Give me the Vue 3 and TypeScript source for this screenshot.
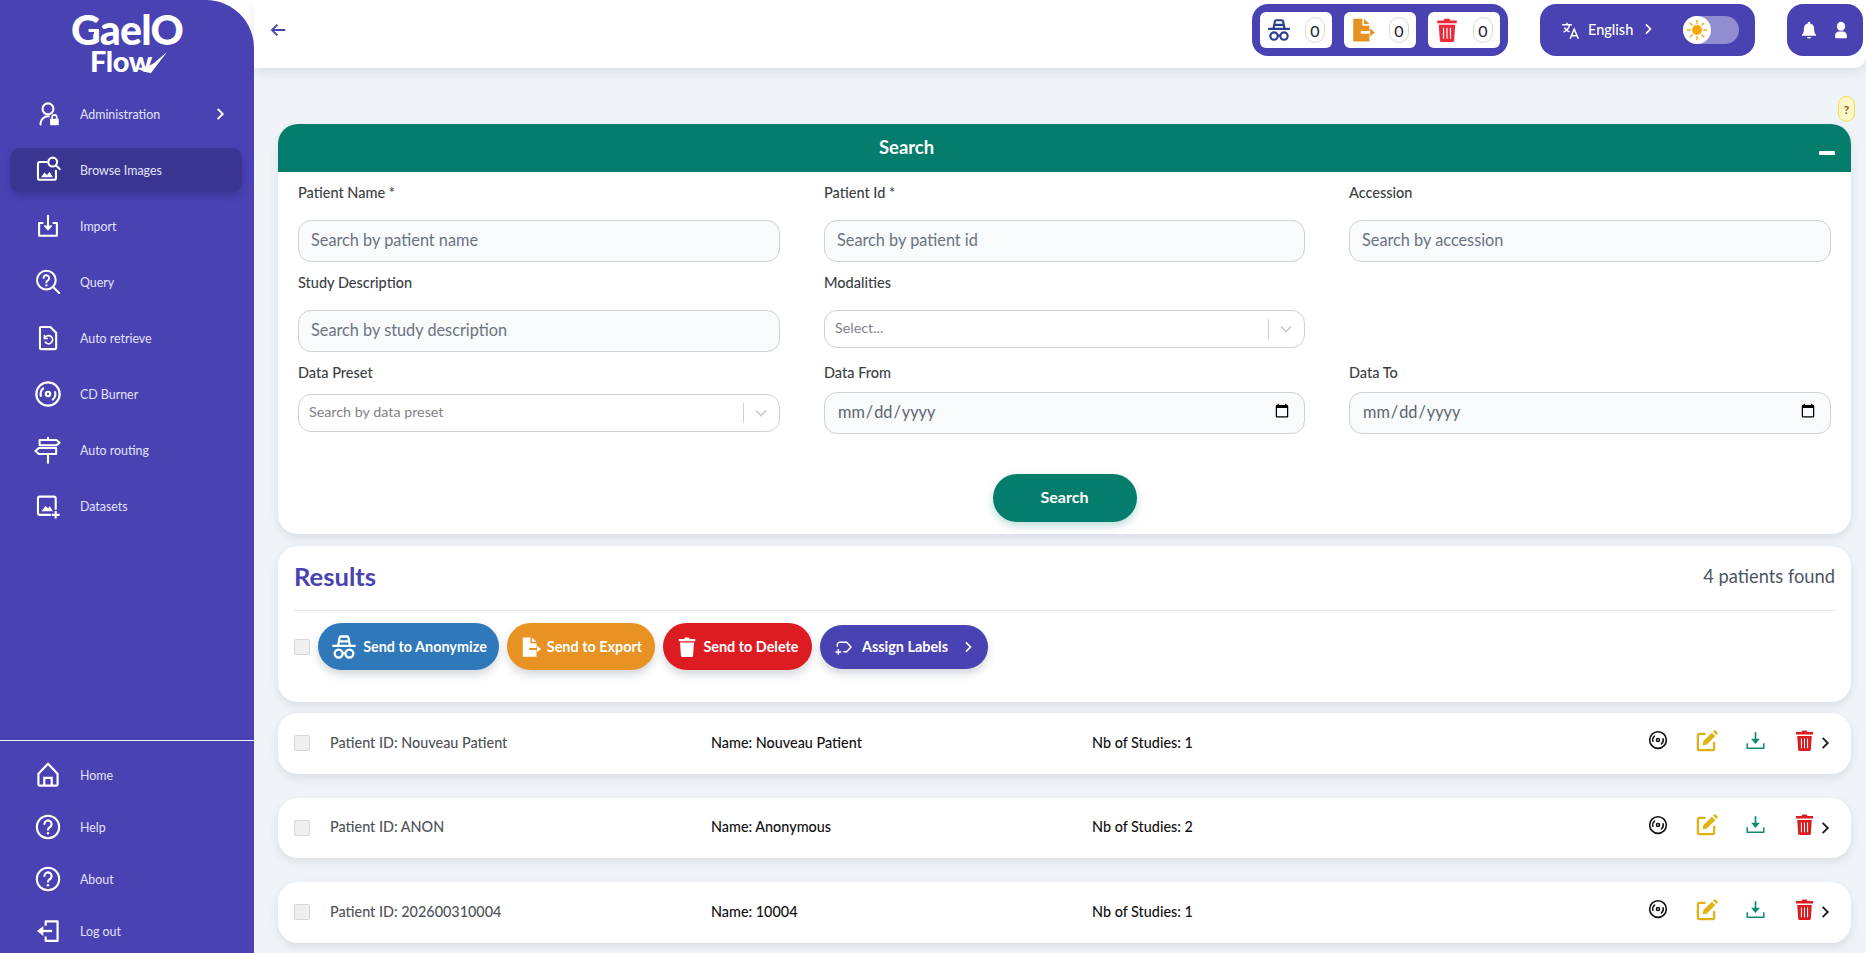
<script setup lang="ts">
interface NavItem { label: string; icon: string; active?: boolean; arrow?: boolean }
const topNav: NavItem[] = [
  { label: 'Administration', icon: 'i-admin', arrow: true },
  { label: 'Browse Images', icon: 'i-browse', active: true },
  { label: 'Import', icon: 'i-import' },
  { label: 'Query', icon: 'i-query' },
  { label: 'Auto retrieve', icon: 'i-retrieve' },
  { label: 'CD Burner', icon: 'i-disc' },
  { label: 'Auto routing', icon: 'i-sign' },
  { label: 'Datasets', icon: 'i-dataset' },
]
const bottomNav: NavItem[] = [
  { label: 'Home', icon: 'i-home' },
  { label: 'Help', icon: 'i-help' },
  { label: 'About', icon: 'i-help' },
  { label: 'Log out', icon: 'i-logout' },
]
const counters = [
  { icon: 'i-hat', cls: 'c-hat' },
  { icon: 'i-export', cls: 'c-export' },
  { icon: 'i-trash', cls: 'c-trash' },
]
const patients = [
  { id: 'Nouveau Patient', name: 'Nouveau Patient', studies: 1 },
  { id: 'ANON', name: 'Anonymous', studies: 2 },
  { id: '202600310004', name: '10004', studies: 1 },
]
const actions = [
  { icon: 'i-disc', cls: 'a-disc' },
  { icon: 'i-edit', cls: 'a-edit' },
  { icon: 'i-download', cls: 'a-download' },
  { icon: 'i-trash', cls: 'a-trash' },
]
</script>

<template>
  <svg class="sprite" aria-hidden="true">
    <symbol id="i-admin" viewBox="0 0 24 24">
      <circle cx="12" cy="7.6" r="4.7" fill="none" stroke="currentColor" stroke-width="1.8" />
      <path d="M5.6 21v-.8a6.4 6.4 0 0 1 7-6.2" fill="none" stroke="currentColor" stroke-width="1.8" stroke-linecap="round" />
      <path d="M13.8 16h7.4v5.6h-7.4z" fill="currentColor" />
      <path d="M15.5 16v-1.2a2 2 0 0 1 4 0V16" fill="none" stroke="currentColor" stroke-width="1.4" />
    </symbol>
    <symbol id="i-browse" viewBox="0 0 24 24">
      <path d="M10.8 5.2H5A1.6 1.6 0 0 0 3.4 6.8v12A1.6 1.6 0 0 0 5 20.4h12.2a1.6 1.6 0 0 0 1.6-1.6v-6.2" fill="none" stroke="currentColor" stroke-width="1.8" stroke-linecap="round" />
      <circle cx="16" cy="5.2" r="3.8" fill="none" stroke="currentColor" stroke-width="1.8" />
      <path d="M18.8 8.2l3.2 3" fill="none" stroke="currentColor" stroke-width="1.8" stroke-linecap="round" />
      <path d="M6 18.2l3-4 2.2 2 2.2-2.6 2.8 4.6z" fill="currentColor" />
    </symbol>
    <symbol id="i-import" viewBox="0 0 24 24">
      <path d="M8 9.4H4.4v11h15.2v-11H16" fill="none" stroke="currentColor" stroke-width="1.8" stroke-linejoin="round" />
      <path d="M12 2.5v11" fill="none" stroke="currentColor" stroke-width="1.8" />
      <path d="M8 11.6h8l-4 4.4z" fill="currentColor" />
    </symbol>
    <symbol id="i-query" viewBox="0 0 24 24">
      <circle cx="10.6" cy="10.4" r="8" fill="none" stroke="currentColor" stroke-width="1.8" />
      <path d="M16.6 16.4l5 5" fill="none" stroke="currentColor" stroke-width="1.8" stroke-linecap="round" />
      <path d="M8.2 8.4a2.4 2.4 0 1 1 3.4 2.4c-.8.4-1 .9-1 1.6" fill="none" stroke="currentColor" stroke-width="1.7" stroke-linecap="round" />
      <circle cx="10.6" cy="14.9" r="1" fill="currentColor" />
    </symbol>
    <symbol id="i-retrieve" viewBox="0 0 24 24">
      <path d="M6 2.6h8l5 5v13a.9.9 0 0 1-.9.9H6a.9.9 0 0 1-.9-.9V3.5A.9.9 0 0 1 6 2.6z" fill="none" stroke="currentColor" stroke-width="1.8" stroke-linejoin="round" />
      <path d="M8.9 9.4v3h3" fill="none" stroke="currentColor" stroke-width="1.4" />
      <path d="M9.2 12.2a3.5 3.5 0 1 1 .4 3.3" fill="none" stroke="currentColor" stroke-width="1.4" stroke-linecap="round" />
    </symbol>
    <symbol id="i-disc" viewBox="0 0 24 24">
      <circle cx="12" cy="12" r="10" fill="none" stroke="currentColor" stroke-width="1.9" />
      <circle cx="12" cy="12" r="1.9" fill="none" stroke="currentColor" stroke-width="1.8" />
      <path d="M5.9 13.6a6.3 6.3 0 0 1 2-6.4M18.1 10.4a6.3 6.3 0 0 1-2 6.4" fill="none" stroke="currentColor" stroke-width="1.8" stroke-linecap="round" />
    </symbol>
    <symbol id="i-sign" viewBox="0 0 24 24">
      <path d="M12 1.5v2M12 15.5v7.5" fill="none" stroke="currentColor" stroke-width="1.8" stroke-linecap="round" />
      <path d="M4.8 3.4h14.4l2.8 2.3-2.8 2.3H4.8zM19 10.2H4.2L1.2 12.8l3 2.6H19z" fill="none" stroke="currentColor" stroke-width="1.7" stroke-linejoin="round" />
    </symbol>
    <symbol id="i-dataset" viewBox="0 0 24 24">
      <path d="M13.8 19.6H5A1.6 1.6 0 0 1 3.4 18V5.6A1.6 1.6 0 0 1 5 4h12A1.6 1.6 0 0 1 18.6 5.6v9" fill="none" stroke="currentColor" stroke-width="1.8" stroke-linecap="round" />
      <path d="M6.4 16.6l3.4-4.6 2.2 2 1.6-1.8 2.6 4.4z" fill="currentColor" />
      <path d="M18.6 16.2v6.6M15.2 19.6h6.8" fill="none" stroke="currentColor" stroke-width="1.8" />
    </symbol>
    <symbol id="i-home" viewBox="0 0 24 24">
      <path d="M12 2.4 20.2 11V20a1.1 1.1 0 0 1-1.1 1.1H4.9A1.1 1.1 0 0 1 3.8 20V11z" fill="none" stroke="currentColor" stroke-width="1.9" stroke-linejoin="round" />
      <path d="M8.8 21v-6.6h6.4V21" fill="none" stroke="currentColor" stroke-width="1.9" />
    </symbol>
    <symbol id="i-help" viewBox="0 0 24 24">
      <circle cx="12" cy="12" r="9.6" fill="none" stroke="currentColor" stroke-width="1.8" />
      <path d="M8.9 9.4a3.1 3.1 0 1 1 4.6 2.8c-1 .5-1.5 1.1-1.5 2.2" fill="none" stroke="currentColor" stroke-width="1.8" stroke-linecap="round" />
      <circle cx="12" cy="17.4" r="1.1" fill="currentColor" />
    </symbol>
    <symbol id="i-logout" viewBox="0 0 24 24">
      <path d="M10 7.6V3.8h10.2v16.6H10v-3.6" fill="none" stroke="currentColor" stroke-width="1.9" stroke-linejoin="round" />
      <path d="M7 12h8.6" fill="none" stroke="currentColor" stroke-width="2" />
      <path d="M8 7.8v8.4L2.6 12z" fill="currentColor" />
    </symbol>
    <symbol id="i-hat" viewBox="0 0 24 24">
      <path d="M7 10.5 8.2 4a1.2 1.2 0 0 1 1.2-1h5.2a1.2 1.2 0 0 1 1.2 1L17 10.5M7.4 7.2h9.2M2 11h20" fill="none" stroke="currentColor" stroke-width="2" />
      <circle cx="7.4" cy="17.6" r="3.4" fill="none" stroke="currentColor" stroke-width="2" />
      <circle cx="16.6" cy="17.6" r="3.4" fill="none" stroke="currentColor" stroke-width="2" />
      <path d="M10.6 17.2h2.8" fill="none" stroke="currentColor" stroke-width="2" />
    </symbol>
    <symbol id="i-export" viewBox="0 0 24 24">
      <path d="M3 1.5h8.4V8H18v5H11a1.2 1.2 0 0 0 0 2.4h7v7.1H3z" fill="currentColor" />
      <path d="M13 1.6 18 6.4h-5z" fill="currentColor" />
      <path d="M18.6 10.6l4.4 3.6-4.4 3.6z" fill="currentColor" />
    </symbol>
    <symbol id="i-trash" viewBox="0 0 24 24">
      <path d="M9 3.2 9.8 1.6h4.4l.8 1.6H21v2.6H3V3.2z" fill="currentColor" />
      <path d="M4.4 7.2h15.2l-1 14.4a1.6 1.6 0 0 1-1.6 1.4H7a1.6 1.6 0 0 1-1.6-1.4z" fill="currentColor" />
      <path d="M8.8 10v10M12 10v10M15.2 10v10" fill="none" stroke="#fff" stroke-width="1.1" />
    </symbol>
    <symbol id="i-edit" viewBox="0 0 24 24">
      <path d="M11 5H4.6A1.6 1.6 0 0 0 3 6.6v13.8A1.6 1.6 0 0 0 4.6 22h13.8a1.6 1.6 0 0 0 1.6-1.6V13.5" fill="none" stroke="currentColor" stroke-width="2.3" />
      <path d="M8.8 12.6 17.6 3.8l3.6 3.6-8.8 8.8-4.4.9zM18.8 2.6l.9-.9a1.4 1.4 0 0 1 2 0l1.6 1.6a1.4 1.4 0 0 1 0 2l-.9.9z" fill="currentColor" />
    </symbol>
    <symbol id="i-download" viewBox="0 0 24 24">
      <path d="M2.5 15.2v5.6h19v-5.6" fill="none" stroke="currentColor" stroke-width="1.7" stroke-linejoin="round" />
      <path d="M12 2.5v8" fill="none" stroke="currentColor" stroke-width="1.9" />
      <path d="M7 10h10l-5 6z" fill="currentColor" />
    </symbol>
    <symbol id="i-translate" viewBox="0 0 24 24">
      <path d="M2.5 5.5h11M8 3v2.5M11 5.5c-.6 3.4-3 6.4-7 8.4M5 8.6c1.2 2.4 3.2 4 6 5" fill="none" stroke="currentColor" stroke-width="1.7" />
      <path d="M11.5 21.5 16.2 10.5l4.8 11M13 18h6.4" fill="none" stroke="currentColor" stroke-width="1.7" />
    </symbol>
    <symbol id="i-sun" viewBox="0 0 24 24">
      <circle cx="12" cy="12" r="5.4" fill="currentColor" />
      <path d="M12 1.6v3M12 19.4v3M1.6 12h3M19.4 12h3M4.6 4.6l2 2M17.4 17.4l2 2M19.4 4.6l-2 2M6.6 17.4l-2 2" fill="none" stroke="currentColor" stroke-width="1.6" stroke-linecap="round" stroke-dasharray="1.6 1.2" />
    </symbol>
    <symbol id="i-bell" viewBox="0 0 24 24">
      <path d="M12 2.2a1.5 1.5 0 0 1 1.5 1.5v.5a6.4 6.4 0 0 1 4.6 6.2c0 4.2 1 5.8 2.4 7.4v1H3.5v-1c1.4-1.6 2.4-3.2 2.4-7.4a6.4 6.4 0 0 1 4.6-6.2v-.5A1.5 1.5 0 0 1 12 2.2z" fill="currentColor" />
      <path d="M9.6 20.4h4.8a2.4 1.8 0 0 1-4.8 0z" fill="currentColor" />
    </symbol>
    <symbol id="i-user" viewBox="0 0 24 24">
      <ellipse cx="12" cy="7.6" rx="5" ry="5.4" fill="currentColor" />
      <path d="M5 21v-2.6c0-3 2.6-4.6 4.4-4.6h5.2c1.8 0 4.4 1.6 4.4 4.6V21a1 1 0 0 1-1 1H6a1 1 0 0 1-1-1z" fill="currentColor" />
    </symbol>
    <symbol id="i-labels" viewBox="0 0 24 24">
      <path d="M9.6 6.4h6.8l5.2 5.6-5.2 5.6h-4" fill="none" stroke="currentColor" stroke-width="1.8" stroke-linejoin="round" />
      <path d="M5.2 11V9a2.6 2.6 0 0 1 2.6-2.6h2" fill="none" stroke="currentColor" stroke-width="1.8" stroke-linecap="round" />
      <path d="M6.4 14.4v7M2.9 17.9h7" fill="none" stroke="currentColor" stroke-width="1.8" />
    </symbol>
    <symbol id="i-chev" viewBox="0 0 16 16">
      <path d="M5.6 2.8 10.8 8l-5.2 5.2" fill="none" stroke="currentColor" stroke-width="1.9" />
    </symbol>
  </svg>

  <div class="app">
    <aside class="sidebar">
      <div class="logo">
        <span class="logo-top">GaelO</span>
        <span class="logo-bottom">Flow</span>
        <svg class="logo-check" viewBox="0 0 40 26">
          <path d="M2 16C10 20 17 23 21 23L37 2 24 13C17 18 9 19 2 16z" fill="#fff" />
        </svg>
        <svg class="logo-face" viewBox="0 0 14 10">
          <path d="M1 1.5h3M7 1.5h6M1 7h9" fill="none" stroke="#4842b3" stroke-width="1.8" />
        </svg>
      </div>
      <nav class="nav">
        <a v-for="n in topNav" :key="n.label" class="nav-item" :class="{ active: n.active }">
          <svg class="nav-icon"><use :href="'#' + n.icon" /></svg>
          <span>{{ n.label }}</span>
          <svg v-if="n.arrow" class="nav-arrow"><use href="#i-chev" /></svg>
        </a>
      </nav>
      <nav class="nav-bottom">
        <a v-for="n in bottomNav" :key="n.label" class="nav-item">
          <svg class="nav-icon"><use :href="'#' + n.icon" /></svg>
          <span>{{ n.label }}</span>
        </a>
      </nav>
    </aside>

    <main class="main">
      <header class="topbar">
        <svg class="back" viewBox="0 0 16 16">
          <path d="M14.4 8H2.6M7.4 3.2 2.6 8l4.8 4.8" fill="none" stroke="currentColor" stroke-width="1.6" />
        </svg>
        <div class="pill counters">
          <div v-for="c in counters" :key="c.icon" class="counter">
            <svg class="counter-icon" :class="c.cls"><use :href="'#' + c.icon" /></svg>
            <span class="badge">0</span>
          </div>
        </div>
        <div class="pill lang">
          <svg class="lang-icon"><use href="#i-translate" /></svg>
          <span class="lang-text">English</span>
          <svg class="lang-chev"><use href="#i-chev" /></svg>
          <div class="toggle">
            <span class="knob"><svg class="sun"><use href="#i-sun" /></svg></span>
          </div>
        </div>
        <div class="pill user">
          <svg class="user-icon"><use href="#i-bell" /></svg>
          <svg class="user-icon"><use href="#i-user" /></svg>
        </div>
      </header>

      <div class="content">
        <div class="help-row"><span class="help">?</span></div>

        <section class="card search">
          <div class="search-head">
            <span class="search-title">Search</span>
            <span class="minus"></span>
          </div>
          <div class="form">
            <label class="field">
              <span class="lbl">Patient Name *</span>
              <input class="inp" placeholder="Search by patient name" />
            </label>
            <label class="field">
              <span class="lbl">Patient Id *</span>
              <input class="inp" placeholder="Search by patient id" />
            </label>
            <label class="field">
              <span class="lbl">Accession</span>
              <input class="inp" placeholder="Search by accession" />
            </label>
            <label class="field">
              <span class="lbl">Study Description</span>
              <input class="inp" placeholder="Search by study description" />
            </label>
            <div class="field">
              <span class="lbl">Modalities</span>
              <div class="select">
                <span class="sel-text">Select...</span>
                <span class="sel-sep"></span>
                <svg class="sel-chev" viewBox="0 0 16 16"><path d="M3 5.5 8 10.5l5-5" fill="none" stroke="currentColor" stroke-width="1.7" /></svg>
              </div>
            </div>
            <div></div>
            <div class="field tight">
              <span class="lbl">Data Preset</span>
              <div class="select sel-preset">
                <span class="sel-text">Search by data preset</span>
                <span class="sel-sep"></span>
                <svg class="sel-chev" viewBox="0 0 16 16"><path d="M3 5.5 8 10.5l5-5" fill="none" stroke="currentColor" stroke-width="1.7" /></svg>
              </div>
            </div>
            <label class="field tight">
              <span class="lbl">Data From</span>
              <input class="inp date" type="date" />
            </label>
            <label class="field tight">
              <span class="lbl">Data To</span>
              <input class="inp date" type="date" />
            </label>
          </div>
          <div class="search-foot">
            <button class="search-btn" type="button">Search</button>
          </div>
        </section>

        <section class="card results">
          <div class="results-head">
            <h2 class="results-title">Results</h2>
            <span class="results-count">4 patients found</span>
          </div>
          <div class="toolbar">
            <span class="check"></span>
            <button class="tbtn blue" type="button"><svg class="tb-icon big"><use href="#i-hat" /></svg>Send to Anonymize</button>
            <button class="tbtn orange" type="button"><svg class="tb-icon"><use href="#i-export" /></svg>Send to Export</button>
            <button class="tbtn red" type="button"><svg class="tb-icon"><use href="#i-trash" /></svg>Send to Delete</button>
            <button class="tbtn indigo" type="button"><svg class="tb-icon small"><use href="#i-labels" /></svg>Assign Labels<svg class="tb-chev"><use href="#i-chev" /></svg></button>
          </div>
        </section>

        <div class="rows">
          <article v-for="p in patients" :key="p.id" class="card row">
            <span class="check"></span>
            <span class="cell pid">Patient ID: {{ p.id }}</span>
            <span class="cell pname">Name: {{ p.name }}</span>
            <span class="cell pname">Nb of Studies: {{ p.studies }}</span>
            <div class="actions">
              <svg v-for="a in actions" :key="a.icon" class="act" :class="a.cls"><use :href="'#' + a.icon" /></svg>
            </div>
            <svg class="row-chev"><use href="#i-chev" /></svg>
          </article>
        </div>
      </div>
    </main>
  </div>
</template>

<style>
html, body { margin: 0; height: 100%; overflow: hidden; }
</style>

<style scoped>
.sprite { position: absolute; width: 0; height: 0; overflow: hidden; }
.app {
  display: flex;
  height: 953px;
  overflow: hidden;
  background: #fff;
  font-family: Lato, "Open Sans", sans-serif;
  color: #111;
}
.sidebar {
  width: 254px;
  flex: none;
  display: flex;
  flex-direction: column;
  background: #4842b3;
  border-top-right-radius: 48px;
  color: #e4e3fa;
  z-index: 2;
}
.logo {
  position: relative;
  height: 92px;
  box-sizing: border-box;
  padding-top: 12px;
  display: flex;
  flex-direction: column;
  align-items: center;
  color: #fff;
  font-weight: 900;
}
.logo-top { font-size: 41px; line-height: 35px; letter-spacing: -0.8px; }
.logo-bottom { font-size: 29px; line-height: 24px; margin: 2px 12px 0 0; letter-spacing: -0.4px; }
.logo-check { position: absolute; left: 130px; top: 50px; width: 40px; height: 26px; }
.logo-face { position: absolute; left: 84px; top: 26px; width: 14px; height: 10px; }
.nav { display: flex; flex-direction: column; gap: 12px; flex: 1; }
.nav-bottom {
  display: flex;
  flex-direction: column;
  gap: 8px;
  border-top: 1px solid #f1f0ff;
  padding-top: 12px;
}
.nav-item {
  height: 44px;
  margin: 0 12px 0 10px;
  padding: 0 14px 0 24px;
  display: flex;
  align-items: center;
  gap: 18px;
  border-radius: 10px;
  font-size: 12.4px;
}
.nav-item.active {
  background: #3a3590;
  box-shadow: 0 4px 6px rgba(40, 36, 110, .35);
}
.nav-icon { width: 28px; height: 28px; color: #fff; flex: none; }
.nav-arrow { width: 16px; height: 16px; margin-left: auto; color: #fff; }

.main { flex: 1; min-width: 0; background: #f0f4f8; display: flex; flex-direction: column; }
.topbar {
  height: 68px;
  flex: none;
  box-sizing: border-box;
  background: #fff;
  border-bottom-right-radius: 12px;
  box-shadow: 0 4px 12px rgba(30, 41, 59, .10);
  display: flex;
  align-items: flex-start;
  padding: 4px 3px 0 15px;
  gap: 32px;
}
.back { width: 18px; height: 18px; color: #4842b3; margin: 17px auto 0 0; }
.pill { height: 52px; background: #4842b3; border-radius: 16px; display: flex; align-items: center; box-sizing: border-box; }
.counters { width: 256px; padding: 0 8px; gap: 12px; }
.counter {
  width: 72px;
  height: 36px;
  background: #fff;
  border-radius: 6px;
  display: flex;
  align-items: center;
  justify-content: space-between;
  padding: 0 7px 0 6px;
  box-sizing: border-box;
}
.counter-icon { width: 26px; height: 26px; }
.c-hat { color: #2a3f8f; }
.c-export { color: #e69222; }
.c-trash { color: #ee2a3a; }
.badge {
  width: 20px;
  height: 26px;
  box-sizing: border-box;
  border: 1px solid #d8d8d8;
  border-radius: 10px;
  display: flex;
  align-items: center;
  justify-content: center;
  font-size: 16px;
  color: #222;
}
.lang { width: 215px; padding-left: 20px; color: #fff; }
.lang-icon { width: 21px; height: 21px; }
.lang-text { font-size: 14.5px; font-weight: 500; margin: 0 0 2px 7px; }
.lang-chev { width: 14px; height: 14px; margin: 0 0 2px 8px; }
.toggle {
  width: 56px;
  height: 28px;
  border-radius: 14px;
  background: rgba(255, 255, 255, .4);
  margin-left: 28px;
  display: flex;
}
.knob {
  width: 28px;
  height: 28px;
  border-radius: 50%;
  background: #fff;
  display: flex;
  align-items: center;
  justify-content: center;
}
.sun { width: 22px; height: 22px; color: #f7a707; }
.user { width: 76px; padding-left: 12px; gap: 12px; color: #fff; }
.user-icon { width: 20px; height: 20px; }

.content { padding: 28px 15px 0 24px; }
.help-row { display: flex; justify-content: flex-end; margin: 0 -4px 2px 0; }
.help {
  width: 17px;
  height: 26px;
  box-sizing: border-box;
  background: #fdf8c8;
  border: 1px solid #f0dc50;
  border-radius: 9px;
  font-size: 12px;
  font-weight: 700;
  color: #8a5a10;
  display: flex;
  align-items: center;
  justify-content: center;
}
.card { background: #fff; border-radius: 20px; box-shadow: 0 4px 10px rgba(30, 41, 59, .10); }
.search { height: 410px; box-sizing: border-box; }
.search-head {
  height: 48px;
  background: #057d6d;
  border-radius: 20px 20px 0 0;
  display: flex;
  align-items: center;
  justify-content: space-between;
  padding: 0 16px 0 601px;
  color: #fff;
}
.search-title { font-size: 18.4px; font-weight: 700; margin-bottom: 2px; }
.minus { width: 16px; height: 4px; margin-top: 10px; background: #fff; border-radius: 1px; }
.form {
  display: grid;
  grid-template-columns: 482px 481px 482px;
  column-gap: 44px;
  row-gap: 11px;
  padding: 11px 20px 0;
}
.field { display: flex; flex-direction: column; gap: 17px; }
.field.tight { gap: 9px; }
.lbl { font-size: 14.5px; line-height: 20px; font-weight: 500; color: #3b3f44; }
.inp {
  height: 42px;
  box-sizing: border-box;
  border: 1px solid #cdd2d6;
  border-radius: 13px;
  background: #f8fafc;
  padding: 0 12px 3px;
  font: inherit;
  font-size: 16.3px;
  color: #5d6670;
  outline: none;
}
.inp::placeholder { color: #6b7480; opacity: 1; }
.select {
  height: 38px;
  box-sizing: border-box;
  border: 1px solid #cdd2d6;
  border-radius: 13px;
  background: #fff;
  display: flex;
  align-items: center;
  padding: 0 10px 0 10px;
}
.sel-preset { margin-top: 2px; }
.sel-text { font-size: 14.3px; color: #7d8287; flex: 1; margin-bottom: 4px; }
.sel-sep { width: 1px; height: 20px; background: #cdd2d6; margin-right: 9px; }
.sel-chev { width: 16px; height: 16px; color: #c8cbce; }
.search-foot { display: flex; justify-content: center; margin-top: 40px; }
.search-btn {
  width: 144px;
  height: 48px;
  border: 0;
  border-radius: 24px;
  background: #057d6d;
  color: #fff;
  font: inherit;
  font-size: 16px;
  font-weight: 700;
  padding: 0 0 3px;
  box-shadow: 0 4px 8px rgba(5, 125, 109, .25);
}
.results { margin-top: 12px; height: 156px; box-sizing: border-box; padding: 0 16px; }
.results-head {
  height: 65px;
  box-sizing: border-box;
  border-bottom: 1px solid #e4e7ea;
  display: flex;
  align-items: center;
  justify-content: space-between;
  padding-bottom: 4px;
}
.results-title { margin: 0; font-size: 25.6px; font-weight: 700; color: #4842b3; }
.results-count { font-size: 18.3px; color: #4b5563; }
.toolbar { display: flex; align-items: center; gap: 8px; padding-top: 12px; }
.check {
  width: 16px;
  height: 16px;
  flex: none;
  box-sizing: border-box;
  border: 1px solid #d5d7da;
  border-radius: 2px;
  background: #efefef;
}
.tbtn {
  height: 47px;
  border: 0;
  border-radius: 24px;
  color: #fff;
  font: inherit;
  font-size: 14.4px;
  font-weight: 700;
  display: flex;
  align-items: center;
  justify-content: center;
  gap: 5px;
  padding: 0;
  box-shadow: 0 5px 9px rgba(30, 41, 59, .18);
}
.tb-icon { width: 22px; height: 22px; color: #fff; }
.tb-icon.big { width: 28px; height: 28px; }
.tb-icon.small { width: 20px; height: 20px; margin-right: 4px; }
.tb-chev { width: 14px; height: 14px; margin-left: 8px; }
.blue { width: 181px; background: #2f78b9; }
.orange { width: 148px; background: #e89223; }
.red { width: 149px; background: #dd1c22; }
.indigo { width: 168px; height: 44px; background: #4842b3; }
.rows { display: flex; flex-direction: column; gap: 24px; margin-top: 11px; }
.row {
  height: 60.5px;
  flex: none;
  display: grid;
  grid-template-columns: 16px 381px 381px 1fr auto 16px;
  align-items: center;
  padding: 0 18px 0 16px;
  box-sizing: border-box;
  font-size: 14.4px;
}
.cell { margin: 0 0 2px 20px; font-weight: 500; }
.pid { color: #4f5358; }
.pname { color: #111; }
.actions { display: flex; align-items: center; gap: 26.8px; margin: 0 1px 6px 0; }
.act { width: 23px; height: 23px; }
.a-disc { color: #111; width: 20px; height: 20px; margin: 0 1px; }
.a-edit { color: #e0b20f; }
.a-download { color: #0e8a6e; width: 21px; height: 21px; }
.a-trash { color: #dd1c22; }
.row-chev { width: 16px; height: 16px; color: #222; }
</style>
